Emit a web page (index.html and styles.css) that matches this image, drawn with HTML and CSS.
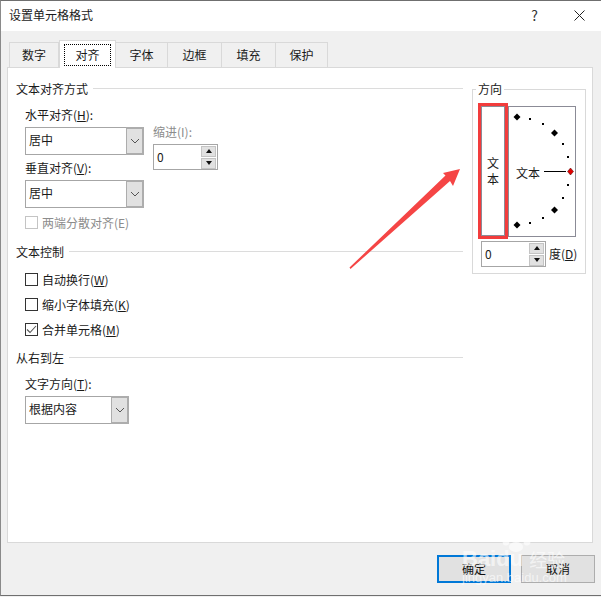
FILE: index.html
```html
<!DOCTYPE html>
<html lang="zh-CN">
<head>
  <meta charset="UTF-8">
  <title>设置单元格格式</title>
  <link rel="stylesheet" href="styles.css">
</head>
<body>
  <div class="window">
    <header class="titlebar">
      <span class="title">设置单元格格式</span>
      <span class="help">?</span>
      <svg class="close" width="11" height="11" viewBox="0 0 11 11"><path d="M0.500 0.500L10.500 10.500M10.500 0.500L0.500 10.500" stroke="#222" stroke-width="1" fill="none"/></svg>
    </header>

    <div class="tabs">
      <div class="tab tab-1">数字</div>
      <div class="tab tab-2 active"><span class="focus">对齐</span></div>
      <div class="tab tab-3">字体</div>
      <div class="tab tab-4">边框</div>
      <div class="tab tab-4">填充</div>
      <div class="tab tab-3">保护</div>
    </div>

    <div class="panel">
      <div class="left">
        <div class="section-title"><span>文本对齐方式</span><i></i></div>
        <div class="align-grid">
          <div>
            <div class="label first">水平对齐(<u>H</u>):</div>
            <div class="select wide">
              <span class="value">居中</span>
              <span class="arrow"><svg width="10" height="6" viewBox="0 0 10 6"><path d="M1 1L5 5L9 1" stroke="#555" fill="none"/></svg></span>
            </div>
            <div class="label second">垂直对齐(<u>V</u>):</div>
            <div class="select wide">
              <span class="value">居中</span>
              <span class="arrow"><svg width="10" height="6" viewBox="0 0 10 6"><path d="M1 1L5 5L9 1" stroke="#555" fill="none"/></svg></span>
            </div>
          </div>
          <div class="indent">
            <div class="label disabled">缩进(I):</div>
            <div class="spin indent-spin">
              <span class="value">0</span>
              <span class="spin-btns">
                <span class="up"></span>
                <span class="down"></span>
              </span>
            </div>
          </div>
        </div>
        <label class="check disabled justify"><span class="box"></span><span>两端分散对齐(E)</span></label>

        <div class="section-title control"><span>文本控制</span><i></i></div>
        <label class="check wrap"><span class="box"></span><span>自动换行(<u>W</u>)</span></label>
        <label class="check shrink"><span class="box"></span><span>缩小字体填充(<u>K</u>)</span></label>
        <label class="check shrink">
          <span class="box"><svg width="11" height="11" viewBox="0 0 11 11"><path d="M1 5.500L4 8.500L10 2" stroke="#555" stroke-width="1.100" fill="none"/></svg></span>
          <span>合并单元格(<u>M</u>)</span>
        </label>

        <div class="section-title rtl"><span>从右到左</span><i></i></div>
        <div class="label first">文字方向(<u>T</u>):</div>
        <div class="select narrow">
          <span class="value">根据内容</span>
          <span class="arrow"><svg width="10" height="6" viewBox="0 0 10 6"><path d="M1 1L5 5L9 1" stroke="#555" fill="none"/></svg></span>
        </div>
      </div>

      <fieldset class="direction">
        <legend>方向</legend>
        <div class="dial-row">
          <div class="vertical"><span>文</span><span>本</span><div class="red-box"></div></div>
          <svg class="dial" width="68" height="131" viewBox="509 107 66 129">
            <g fill="#000">
              <path d="M517 113.500l3.500 3.500-3.500 3.500-3.500-3.500z"/>
              <path d="M554.500 129.500l3.500 3.500-3.500 3.500-3.500-3.500z"/>
              <path d="M554.500 206.500l3.500 3.500-3.500 3.500-3.500-3.500z"/>
              <path d="M517 221.500l3.500 3.500-3.500 3.500-3.500-3.500z"/>
              <rect x="529" y="118" width="2" height="2"/>
              <rect x="542" y="123" width="2" height="2"/>
              <rect x="562" y="143" width="2" height="2"/>
              <rect x="567" y="156" width="2" height="2"/>
              <rect x="567" y="184" width="2" height="2"/>
              <rect x="562" y="197" width="2" height="2"/>
              <rect x="542" y="217" width="2" height="2"/>
              <rect x="529" y="222" width="2" height="2"/>
              <rect x="544" y="171" width="22" height="1"/>
            </g>
            <path d="M570.500 168l3 3.500-3 3.500-3-3.500z" fill="#e00000" stroke="#400" stroke-width="0.500"/>
            <text x="516" y="178" class="dial-text">文本</text>
          </svg>
        </div>
        <div class="degree-row">
          <div class="spin degree-spin">
            <span class="value">0</span>
            <span class="spin-btns">
              <span class="up"></span>
              <span class="down"></span>
            </span>
          </div>
          <span>度(<u>D</u>)</span>
        </div>
      </fieldset>
    </div>

    <div class="footer">
      <button class="btn default">确定</button>
      <button class="btn">取消</button>
    </div>
  </div>

  <!-- annotation arrow drawn over the dialog -->
  <svg class="red-arrow" width="601" height="597" viewBox="0 0 601 597">
    <path d="M349.500 267.500L445.500 175.500L443 173L460 169L453 186L450 181L350.500 269Z" fill="#f54545"/>
  </svg>

  <!-- site watermark -->
  <div class="watermark">
    <svg class="paw" width="30" height="20" viewBox="0 0 30 20">
      <ellipse cx="5" cy="9" rx="3.500" ry="4.500"/>
      <ellipse cx="12" cy="4" rx="3.500" ry="4"/>
      <ellipse cx="20" cy="4" rx="3.500" ry="4"/>
      <ellipse cx="26" cy="9" rx="3.500" ry="4.500"/>
      <ellipse cx="15" cy="15" rx="7" ry="5"/>
    </svg>
    <div class="wm-top"><span class="wm-name">Baidu</span><span class="wm-cn">经验</span></div>
    <div class="wm-url">jingyan.baidu.com</div>
  </div>
</body>
</html>
```

FILE: styles.css
```css
* {
  box-sizing: border-box;
}
body {
  margin: 0;
  width: 601px;
  height: 597px;
  overflow: hidden;
  position: relative;
  background: #f0f0f0;
  color: #1a1a1a;
  font-family: "Noto Sans CJK SC", "Noto Sans", sans-serif;
  font-size: 12px;
  line-height: 16px;
}
u {
  text-decoration: underline;
  text-underline-offset: 1px;
}
.window {
  height: 596px;
  background: #f0f0f0;
  border-top: 1px solid #6f6f6f;
  border-left: 1px solid #8a8a8a;
  border-bottom: 1px solid #6f6f6f;
}

/* title bar */
.titlebar {
  height: 30px;
  background: #fff;
  display: flex;
  align-items: center;
  padding: 0 0 2px 8px;
}
.title {
  flex: 1;
}
.help {
  font-size: 14px;
  margin-right: 36px;
  color: #333;
}
.close {
  margin-right: 16px;
}

/* tabs */
.tabs {
  height: 36px;
  display: flex;
  align-items: flex-end;
  padding-left: 8px;
}
.tab {
  height: 25px;
  display: flex;
  align-items: center;
  justify-content: center;
  background: #f0f0f0;
  border: 1px solid #d9d9d9;
  border-bottom: none;
  border-left-width: 0;
}
.tab-1 {
  width: 50px;
  border-left-width: 1px;
}
.tab-2 {
  width: 57px;
}
.tab-3 {
  width: 52px;
}
.tab-4 {
  width: 54px;
}
.tab.active {
  height: 28px;
  margin-bottom: -1px;
  position: relative;
  background: #fff;
  border-left-width: 1px;
}
.focus {
  width: 47px;
  height: 22px;
  display: flex;
  align-items: center;
  justify-content: center;
  border: 1px dotted #000;
}

/* main panel */
.panel {
  width: 586px;
  height: 476px;
  margin-left: 6px;
  padding: 13px 0 0 8px;
  display: flex;
  gap: 9px;
  background: #fff;
  border: 1px solid #d9d9d9;
}
.left {
  width: 447px;
}
.section-title {
  display: flex;
  align-items: center;
  gap: 5px;
}
.section-title i {
  flex: 1;
  height: 1px;
  margin-top: -1px;
  background: #dcdcdc;
}
.section-title.control {
  margin-top: 15px;
}
.section-title.rtl {
  margin-top: 14px;
}
.align-grid {
  display: flex;
  margin-left: 9px;
  gap: 9px;
}
.label.first {
  margin: 10px 0 4px 9px;
}
.align-grid .label.first {
  margin-left: 0;
}
.label.second {
  margin: 5px 0 4px;
}
.disabled {
  color: #8c8c8c;
}
.indent {
  padding-top: 27px;
}
.indent .label {
  margin-bottom: 4px;
}

/* dropdowns */
.select {
  height: 28px;
  display: flex;
  align-items: center;
  background: #fff;
  border: 1px solid #a6a6a6;
  border-right: none;
}
.select.wide {
  width: 119px;
}
.select.narrow {
  width: 104px;
  margin: 1px 0 0 9px;
}
.select .value {
  flex: 1;
  padding: 0 0 2px 3px;
}
.arrow {
  width: 18px;
  height: 28px;
  margin-top: -1px;
  margin-bottom: -1px;
  flex: none;
  display: flex;
  align-items: center;
  justify-content: center;
  background: #e1e1e1;
  border: 2px solid #adadad;
  border-left-width: 1px;
}

/* number spinners */
.spin {
  display: flex;
  align-items: center;
  justify-content: space-between;
  background: #fff;
  border: 1px solid #a6a6a6;
  padding: 0 1px 0 3px;
}
.indent-spin {
  width: 65px;
  height: 26px;
}
.degree-spin {
  width: 65px;
  height: 26px;
}
.spin-btns {
  display: flex;
  flex-direction: column;
  gap: 1px;
}
.spin-btns span {
  width: 15px;
  height: 11px;
  display: flex;
  align-items: center;
  justify-content: center;
  background: #e1e1e1;
  border: 1px solid #c4c4c4;
}
.spin-btns span::after {
  content: "";
  border-left: 3.5px solid transparent;
  border-right: 3.5px solid transparent;
}
.spin-btns .up::after {
  border-bottom: 4px solid #111;
}
.spin-btns .down::after {
  border-top: 4px solid #111;
}

/* checkboxes */
.check {
  display: flex;
  align-items: center;
  height: 13px;
  margin-left: 9px;
  gap: 4px;
}
.check.justify {
  margin-top: 8px;
}
.check.wrap {
  margin-top: 13px;
}
.check.shrink {
  margin-top: 12px;
}
.box {
  width: 13px;
  height: 13px;
  flex: none;
  display: flex;
  align-items: center;
  justify-content: center;
  background: #fff;
  border: 1px solid #333;
}
.check.disabled .box {
  border-color: #c4c4c4;
}

/* orientation group */
.direction {
  width: 114px;
  height: 193px;
  margin: 0;
  padding: 0 0 0 8px;
  border: 1px solid #d9d9d9;
}
.direction legend {
  margin-left: -5px;
  padding: 0 2px;
  line-height: 16px;
}
.dial-row {
  display: flex;
  gap: 3px;
  margin-top: 9px;
}
.vertical {
  width: 24px;
  height: 130px;
  position: relative;
  display: flex;
  flex-direction: column;
  align-items: center;
  justify-content: center;
  border: 1px solid #8b8b96;
}
.red-box {
  position: absolute;
  inset: -4px;
  border: 3px solid #f23c3c;
}
.dial {
  display: block;
  flex: none;
  border: 1px solid #8b8b96;
}
.dial-text {
  font-size: 12px;
  fill: #1a1a1a;
}
.degree-row {
  display: flex;
  align-items: center;
  gap: 3px;
  margin-top: 4px;
}

/* bottom buttons */
.footer {
  display: flex;
  justify-content: flex-end;
  gap: 10px;
  padding: 12px 6px 0 0;
}
.btn {
  width: 74px;
  height: 28px;
  padding: 0;
  font: inherit;
  color: #111;
  background: #e1e1e1;
  border: 1px solid #adadad;
}
.btn.default {
  border: 2px solid #0078d7;
}

/* overlays */
.red-arrow {
  position: absolute;
  left: 0;
  top: 0;
}
.watermark {
  position: absolute;
  left: 462px;
  top: 532px;
  width: 110px;
  height: 52px;
  color: rgba(255, 255, 255, 0.62);
  font-family: "Liberation Sans", sans-serif;
}
.paw {
  position: absolute;
  left: 39px;
  top: 0;
  fill: rgba(255, 255, 255, 0.62);
}
.wm-top {
  position: absolute;
  left: 0;
  top: 15px;
  display: flex;
  align-items: center;
  gap: 6px;
}
.wm-name {
  font-size: 22px;
  line-height: 24px;
  font-weight: bold;
}
.wm-cn {
  font-family: "Noto Sans CJK SC", sans-serif;
  font-size: 18px;
  line-height: 20px;
}
.wm-url {
  position: absolute;
  left: 0;
  top: 39px;
  font-size: 13px;
  line-height: 13px;
  white-space: nowrap;
}
```
